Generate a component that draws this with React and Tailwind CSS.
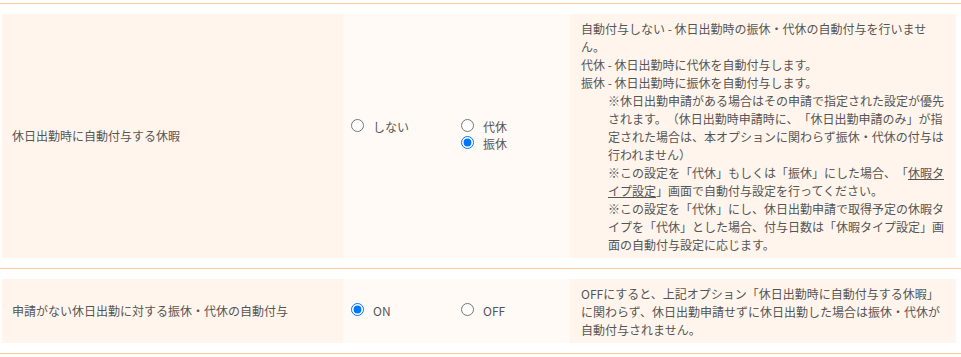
import React from "react";

const font = { fontFamily: '"Noto Sans CJK JP", "Noto Sans", sans-serif' };

function Radio({ name, checked, label, className = "" }) {
  return (
    <label className={"flex items-start " + className}>
      <input
        type="radio"
        name={name}
        defaultChecked={checked}
        className="m-0 mt-[0px] w-[13px] h-[13px] shrink-0"
      />
      <span className="ml-[9px] leading-[18px] -mt-[1px]">{label}</span>
    </label>
  );
}

export default function App() {
  const line = "whitespace-nowrap leading-[18px]";
  const ind = "whitespace-nowrap leading-[18px] pl-[27px]";
  return (
    <div className="w-[961px] h-[357px] bg-white pt-[3px] text-[12px] text-[#555] [text-spacing-trim:space-all]" style={font}>
      <div className="border-t border-[#fbc994] py-[10px]">
        <div className="flex ml-[2px] w-[954px] h-[244px]">
          <div className="w-[341px] bg-[#fff5ec] flex items-center pl-[10px] leading-[18px]">
            休日出勤時に自動付与する休暇
          </div>
          <div className="w-[227px] bg-[#fffaf6] flex items-center pl-[8px]">
            <div className="flex items-start">
              <Radio name="r1" label="しない" className="w-[110px]" />
              <div className="flex flex-col">
                <Radio name="r1" label="代休" />
                <Radio name="r1" label="振休" checked />
              </div>
            </div>
          </div>
          <div className="w-[386px] bg-[#fff5ec] flex flex-col justify-center pl-[11px] pt-[1px]">
            <div className={line}>自動付与しない - 休日出勤時の振休・代休の自動付与を行いませ</div>
            <div className={line}>ん。</div>
            <div className={line}>代休 - 休日出勤時に代休を自動付与します。</div>
            <div className={line}>振休 - 休日出勤時に振休を自動付与します。</div>
            <div className={ind}>※休日出勤申請がある場合はその申請で指定された設定が優先</div>
            <div className={ind}>されます。（休日出勤時申請時に、「休日出勤申請のみ」が指</div>
            <div className={ind}>定された場合は、本オプションに関わらず振休・代休の付与は</div>
            <div className={ind}>行われません）</div>
            <div className={ind}>
              ※この設定を「代休」もしくは「振休」にした場合、「<span className="underline">休暇タ</span>
            </div>
            <div className={ind}>
              <span className="underline">イプ設定</span>」画面で自動付与設定を行ってください。
            </div>
            <div className={ind}>※この設定を「代休」にし、休日出勤申請で取得予定の休暇タ</div>
            <div className={ind}>イプを「代休」とした場合、付与日数は「休暇タイプ設定」画</div>
            <div className={ind}>面の自動付与設定に応じます。</div>
          </div>
        </div>
      </div>
      <div className="border-t border-[#fbc994] py-[10px]">
        <div className="flex ml-[2px] w-[954px] h-[64px]">
          <div className="w-[341px] bg-[#fff5ec] flex items-center pl-[10px] leading-[18px]">
            申請がない休日出勤に対する振休・代休の自動付与
          </div>
          <div className="w-[227px] bg-[#fffaf6] flex items-center pl-[8px]">
            <div className="flex items-start">
              <Radio name="r2" label="ON" checked className="w-[110px]" />
              <Radio name="r2" label="OFF" />
            </div>
          </div>
          <div className="w-[386px] bg-[#fff5ec] flex flex-col justify-center pl-[11px] pt-[1px]">
            <div className={line}>OFFにすると、上記オプション「休日出勤時に自動付与する休暇」</div>
            <div className={line}>に関わらず、休日出勤申請せずに休日出勤した場合は振休・代休が</div>
            <div className={line}>自動付与されません。</div>
          </div>
        </div>
      </div>
      <div className="border-t border-[#fbc994]"></div>
    </div>
  );
}
